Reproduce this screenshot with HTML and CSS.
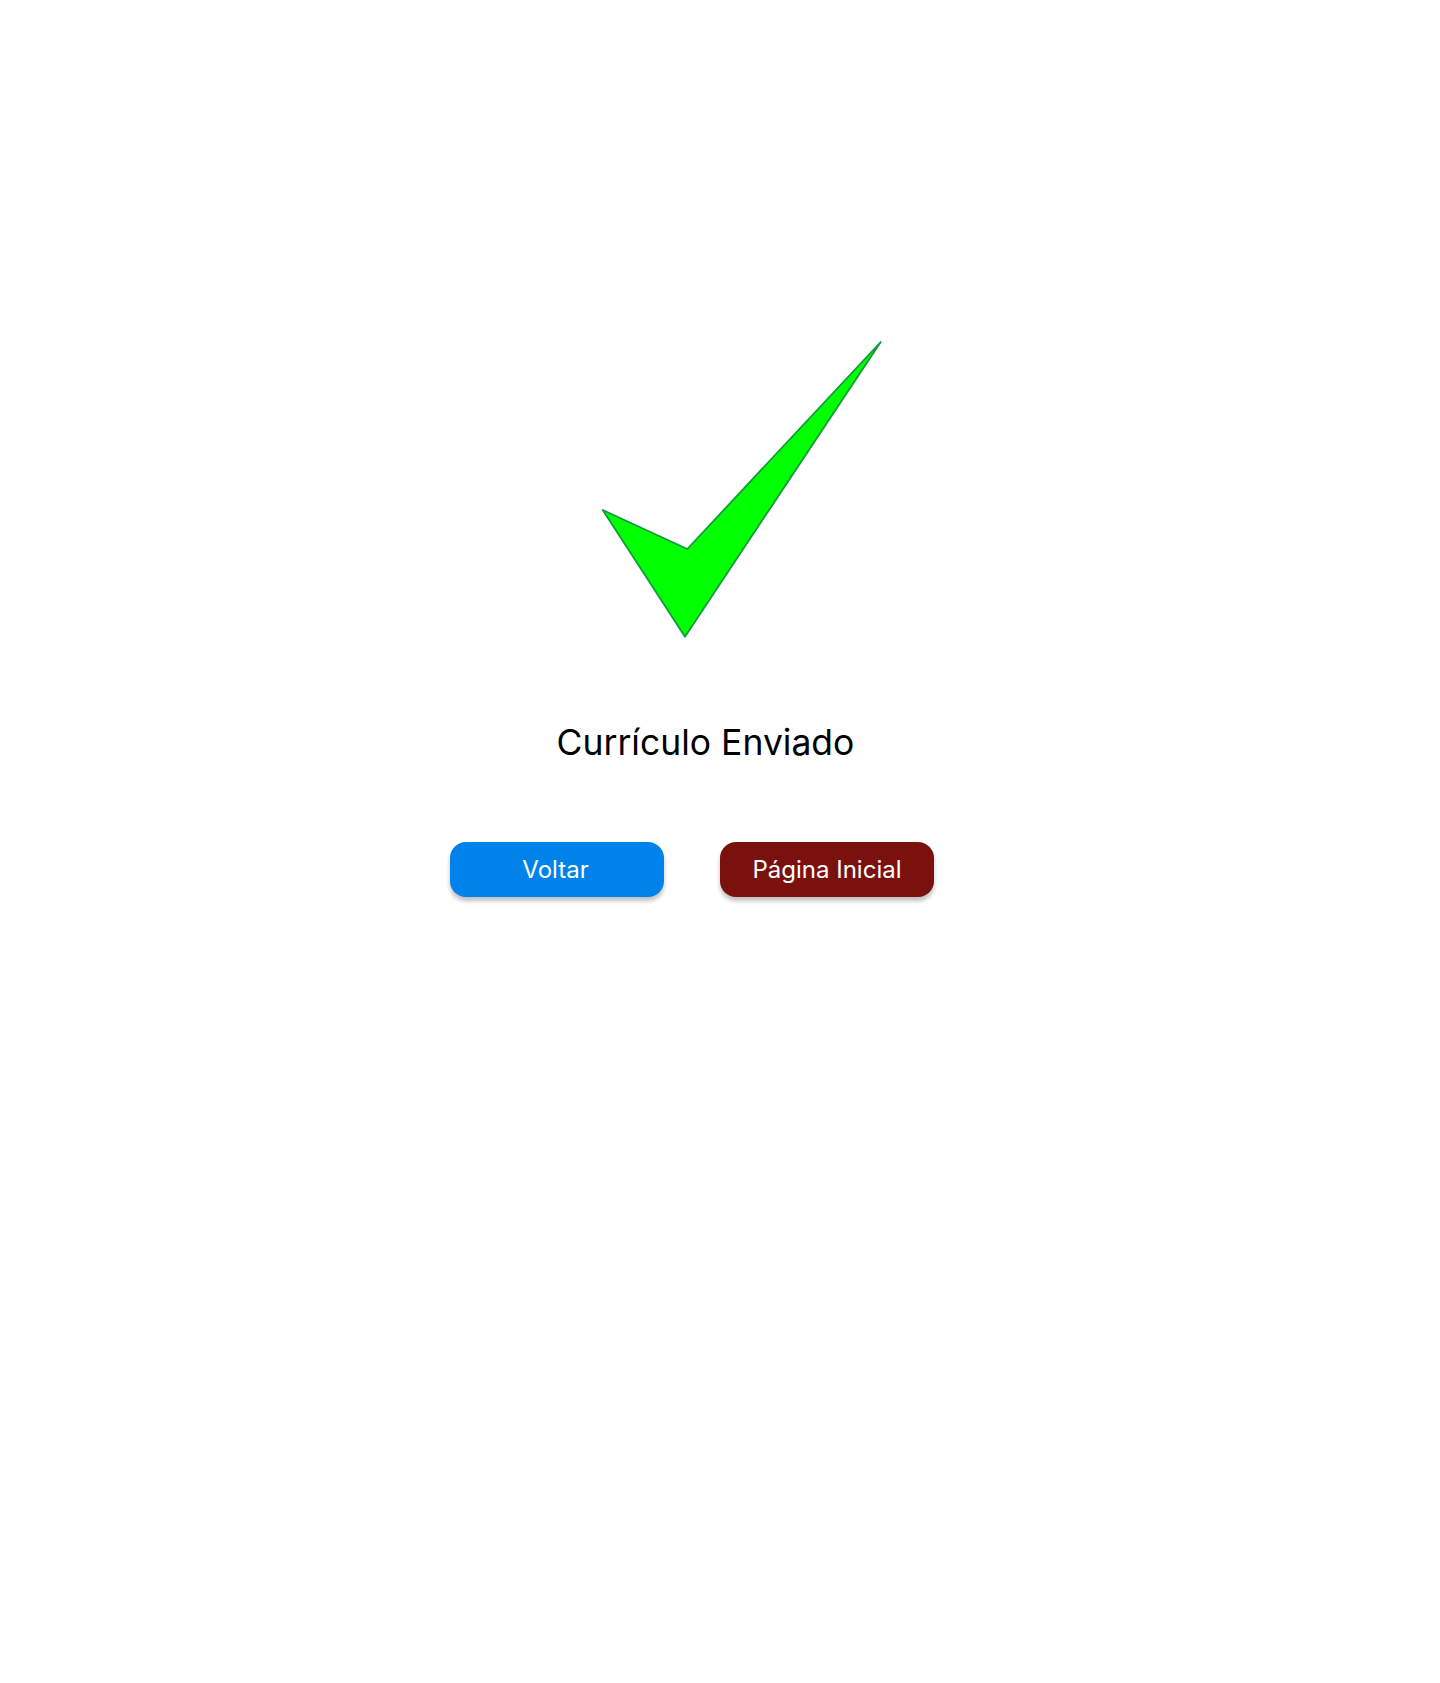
FILE: index.html
```html
<!DOCTYPE html>
<html lang="pt">
<head>
<meta charset="utf-8">
<title>Currículo Enviado</title>
<link rel="stylesheet" href="styles.css">
</head>
<body>
<main class="page">
  <svg class="check" width="284" height="300" viewBox="0 0 284 300" aria-hidden="true">
    <polygon points="2.7,170 87.3,209 280.7,2 85,296.7" fill="#00ff00" stroke="#139a3c" stroke-width="1.8" stroke-linejoin="round"/>
  </svg>
  <h1 class="title">Currículo Enviado</h1>
  <div class="actions">
    <button class="btn btn-blue" type="button">Voltar</button>
    <button class="btn btn-red" type="button">Página Inicial</button>
  </div>
</main>
</body>
</html>
```
FILE: styles.css
```css
html, body {
  margin: 0;
  padding: 0;
  background: #ffffff;
}
body {
  font-family: Inter, "Noto Sans", sans-serif;
  width: 1440px;
  height: 1683px;
}
.page {
  display: flex;
  flex-direction: column;
  align-items: center;
  padding-top: 340px;
}
.check {
  display: block;
  margin-left: 44px;
}
.title {
  margin: 81px 29px 0 0;
  font-size: 35.5px;
  line-height: 44px;
  font-weight: 400;
  color: #000000;
}
.actions {
  display: flex;
  gap: 56px;
  margin: 77px 56px 0 0;
}
.btn {
  width: 214px;
  height: 55px;
  border: none;
  border-radius: 16px;
  font-family: Inter, "Noto Sans", sans-serif;
  font-size: 24px;
  font-weight: 400;
  color: #ffffff;
  box-shadow: 0 4px 4px rgba(0, 0, 0, 0.25);
  padding: 0;
}
.btn-blue {
  background: #0082eb;
  padding-right: 3px;
}
.btn-red {
  background: #7b110d;
}
```
